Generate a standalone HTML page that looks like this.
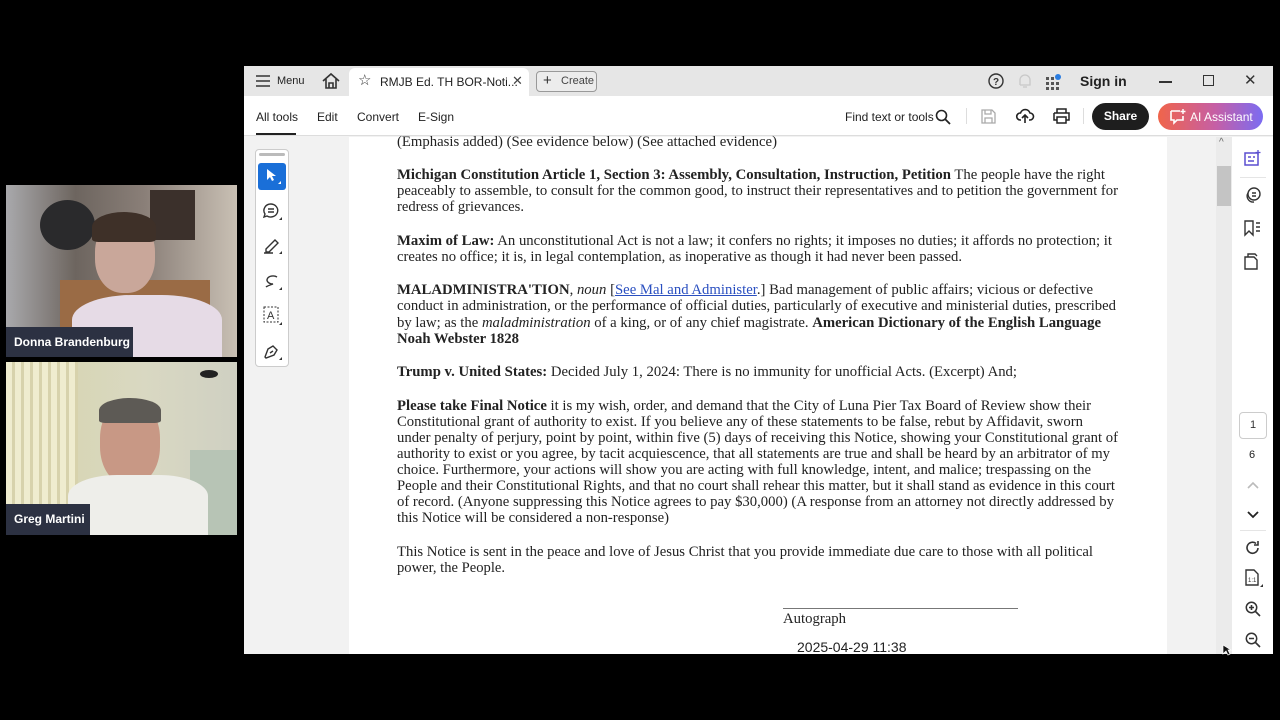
<!DOCTYPE html>
<html><head><meta charset="utf-8"><style>
*{margin:0;padding:0;box-sizing:border-box}
body{width:1280px;height:720px;background:#000;position:relative;overflow:hidden;font-family:"Liberation Sans",sans-serif}
.abs{position:absolute}
.l{position:absolute;left:397px;margin-top:1px;white-space:nowrap;font:14.6px/16px "Liberation Serif",serif;color:#222;transform-origin:0 50%}
.ui{font-family:"Liberation Sans",sans-serif;color:#222}
svg{position:absolute;overflow:visible}
a{color:#2a4fc0;text-decoration:underline}
</style></head><body>
<!-- video tiles -->
<div class="abs" style="left:6px;top:185px;width:231px;height:172px;background:linear-gradient(90deg,#a9a9ac 0%,#6d655f 30%,#8a7f78 60%,#c9c0b4 100%)"></div>
<div class="abs" style="left:40px;top:200px;width:55px;height:50px;border-radius:50%;background:#2a2a2c"></div>
<div class="abs" style="left:150px;top:190px;width:45px;height:50px;background:#3b302b"></div>
<div class="abs" style="left:60px;top:280px;width:150px;height:77px;background:#9a6b45"></div>
<div class="abs" style="left:95px;top:218px;width:60px;height:75px;border-radius:45%;background:#c9a79a"></div>
<div class="abs" style="left:92px;top:212px;width:64px;height:30px;border-radius:50% 50% 10% 10%;background:#3e3028"></div>
<div class="abs" style="left:72px;top:295px;width:150px;height:62px;border-radius:40% 40% 0 0;background:#e6dbe6"></div>
<div class="abs" style="left:6px;top:327px;width:127px;height:30px;background:#2c3142;color:#fff;font:bold 12px/30px 'Liberation Sans',sans-serif;padding-left:8px">Donna Brandenburg</div>

<div class="abs" style="left:6px;top:362px;width:231px;height:173px;background:linear-gradient(90deg,#e4e1c6 0%,#d8d6b4 25%,#d9d8c2 60%,#cfd0c2 100%)"></div>
<div class="abs" style="left:6px;top:362px;width:72px;height:173px;background:repeating-linear-gradient(90deg,#efeccf 0 6px,#d7d2ac 6px 9px)"></div>
<div class="abs" style="left:200px;top:370px;width:18px;height:8px;border-radius:50%;background:#222"></div>
<div class="abs" style="left:190px;top:450px;width:47px;height:85px;background:#b7c4b5"></div>
<div class="abs" style="left:100px;top:400px;width:60px;height:85px;border-radius:45%;background:#c89885"></div>
<div class="abs" style="left:99px;top:398px;width:62px;height:25px;border-radius:50% 50% 10% 10%;background:#5d5a55"></div>
<div class="abs" style="left:68px;top:475px;width:140px;height:60px;border-radius:35% 35% 0 0;background:#eeeeea"></div>
<div class="abs" style="left:6px;top:504px;width:84px;height:31px;background:#2c3142;color:#fff;font:bold 12px/31px 'Liberation Sans',sans-serif;padding-left:8px">Greg Martini</div>

<!-- window -->
<div class="abs" style="left:244px;top:66px;width:1029px;height:588px;background:#f2f2f2"></div>
<div class="abs" style="left:244px;top:66px;width:1029px;height:30px;background:#e6e6e6"></div>
<div class="abs" style="left:349px;top:68px;width:180px;height:28px;background:#fff;border-radius:6px 6px 0 0"></div>
<svg style="left:256px;top:75px" width="14" height="12"><path d="M0 1H14M0 6H14M0 11H14" stroke="#333" stroke-width="1.5"/></svg>
<div class="abs ui" style="left:277px;top:75px;font-size:11px">Menu</div>
<svg style="left:322px;top:73px" width="18" height="16"><path d="M1 8L9 1L17 8M4 6V15H14V6M7 15V10H11V15" stroke="#333" stroke-width="1.6" fill="none"/></svg>
<div class="abs ui" style="left:358px;top:71px;font-size:15px;color:#333">☆</div>
<div class="abs ui" style="left:380px;top:75px;font-size:12px">RMJB Ed. TH BOR-Noti...</div>
<div class="abs ui" style="left:512px;top:73px;font-size:13px;color:#444">✕</div>
<div class="abs" style="left:536px;top:71px;width:61px;height:21px;border:1px solid #999;border-radius:4px;background:#ececec"></div>
<div class="abs ui" style="left:543px;top:72px;font-size:15px;color:#333">+</div>
<div class="abs ui" style="left:561px;top:75px;font-size:11px;color:#444">Create</div>
<svg style="left:988px;top:73px" width="16" height="16"><circle cx="8" cy="8" r="7" stroke="#333" stroke-width="1.4" fill="none"/><text x="5" y="12" font-size="10" font-family="Liberation Sans" fill="#333" font-weight="bold">?</text></svg>
<svg style="left:1018px;top:73px" width="14" height="16"><path d="M2 12V7A5 5 0 0 1 12 7V12H2M5 14H9" stroke="#c8c8c8" stroke-width="1.3" fill="none"/></svg>
<svg style="left:1046px;top:74px" width="16" height="16"><g fill="#555"><rect x="0" y="3" width="3" height="3"/><rect x="5" y="3" width="3" height="3"/><rect x="0" y="8" width="3" height="3"/><rect x="5" y="8" width="3" height="3"/><rect x="10" y="8" width="3" height="3"/><rect x="0" y="13" width="3" height="3"/><rect x="5" y="13" width="3" height="3"/><rect x="10" y="13" width="3" height="3"/></g><circle cx="12" cy="3" r="3" fill="#2a7de1"/></svg>
<div class="abs ui" style="left:1080px;top:73px;font-size:14px;font-weight:bold">Sign in</div>
<div class="abs" style="left:1159px;top:81px;width:13px;height:1.5px;background:#333"></div>
<div class="abs" style="left:1203px;top:75px;width:11px;height:11px;border:1.3px solid #333"></div>
<div class="abs ui" style="left:1244px;top:71px;font-size:15px;color:#333">✕</div>

<!-- toolbar -->
<div class="abs" style="left:244px;top:96px;width:1029px;height:40px;background:#fff;border-bottom:1px solid #ddd"></div>
<div class="abs ui" style="left:256px;top:110px;font-size:12px">All tools</div>
<div class="abs" style="left:256px;top:133px;width:40px;height:2px;background:#222"></div>
<div class="abs ui" style="left:317px;top:110px;font-size:12px">Edit</div>
<div class="abs ui" style="left:357px;top:110px;font-size:12px">Convert</div>
<div class="abs ui" style="left:418px;top:110px;font-size:12px">E-Sign</div>
<div class="abs ui" style="left:845px;top:110px;font-size:12px">Find text or tools</div>
<svg style="left:935px;top:109px" width="16" height="16"><circle cx="6.5" cy="6.5" r="5" stroke="#222" stroke-width="1.6" fill="none"/><path d="M10 10L15 15" stroke="#222" stroke-width="1.8"/></svg>
<div class="abs" style="left:966px;top:108px;width:1px;height:16px;background:#ddd"></div>
<svg style="left:981px;top:109px" width="15" height="15"><path d="M1 1H11L14 4V14H1Z M4 1V5H10V1 M4 14V9H11V14" stroke="#aaa" stroke-width="1.3" fill="none"/></svg>
<svg style="left:1016px;top:108px" width="18" height="16"><path d="M5 12H4A3.5 3.5 0 0 1 4.5 5A5 5 0 0 1 14 5A3.5 3.5 0 0 1 14 12H13M9 15V7M6 10L9 7L12 10" stroke="#222" stroke-width="1.6" fill="none"/></svg>
<svg style="left:1053px;top:108px" width="17" height="16"><path d="M4 5V1H13V5M1 5H16V12H13M4 12H1V5M4 9H13V15H4Z" stroke="#222" stroke-width="1.5" fill="none"/></svg>
<div class="abs" style="left:1083px;top:108px;width:1px;height:16px;background:#ddd"></div>
<div class="abs" style="left:1092px;top:103px;width:57px;height:27px;border-radius:14px;background:#1e1e1e;color:#fff;font:bold 12px/27px 'Liberation Sans';text-align:center">Share</div>
<div class="abs" style="left:1158px;top:103px;width:105px;height:27px;border-radius:14px;background:linear-gradient(90deg,#f0644a,#c55fa6 55%,#7b6cf2)"></div>
<svg style="left:1170px;top:109px" width="16" height="15"><path d="M1 2H10M1 2V11H4V14L7 11H13V7" stroke="#fff" stroke-width="1.6" fill="none"/><path d="M13 0V5M10.5 2.5H15.5" stroke="#fff" stroke-width="1.4"/></svg>
<div class="abs" style="left:1190px;top:110px;color:#fff;font:12px 'Liberation Sans'">AI Assistant</div>

<!-- left tool panel -->
<div class="abs" style="left:255px;top:149px;width:34px;height:218px;background:#fff;border:1px solid #ccc;border-radius:4px"></div>
<div class="abs" style="left:259px;top:153px;width:26px;height:3px;background:#bbb;border-radius:2px"></div>
<div class="abs" style="left:258px;top:163px;width:28px;height:27px;background:#1a6fd8;border-radius:3px"></div>
<svg style="left:267px;top:169px" width="16" height="16"><path d="M0 0L0 11L3 8L5 12L7 11L5 7L9 7Z" fill="#fff"/><path d="M14 12V15H11Z" fill="#fff"/></svg>
<svg style="left:263px;top:203px" width="20" height="18"><path d="M8 1A7 6.5 0 1 1 4 13L1 14L2 11A7 6.5 0 0 1 8 1ZM5 6H11M5 9H11" stroke="#333" stroke-width="1.4" fill="none"/><path d="M19 14V17H16Z" fill="#333"/></svg>
<svg style="left:263px;top:237px" width="20" height="18"><path d="M3 12L12 3L15 6L6 15H3ZM1 16H10" stroke="#333" stroke-width="1.4" fill="none"/><path d="M19 14V17H16Z" fill="#333"/></svg>
<svg style="left:263px;top:273px" width="20" height="18"><path d="M14 4A6 4 0 1 0 10 11C7 12 4 13 3 14" stroke="#333" stroke-width="1.4" fill="none"/><path d="M19 14V17H16Z" fill="#333"/></svg>
<svg style="left:263px;top:306px" width="20" height="20"><rect x="1" y="1" width="14" height="15" stroke="#333" stroke-dasharray="2 1.5" fill="none"/><text x="4" y="13" font-size="11" font-family="Liberation Sans" fill="#333">A</text><path d="M19 16V19H16Z" fill="#333"/></svg>
<svg style="left:263px;top:343px" width="20" height="18"><path d="M2 14L5 6L10 3L14 7L11 12L3 15ZM7 10L10 8" stroke="#333" stroke-width="1.4" fill="none"/><path d="M19 14V17H16Z" fill="#333"/></svg>

<!-- page -->
<div class="abs" style="left:349px;top:137px;width:818px;height:517px;background:#fff"></div>
<!-- scrollbar -->
<div class="abs" style="left:1216px;top:137px;width:16px;height:517px;background:#ebebeb"></div>
<div class="abs ui" style="left:1219px;top:137px;font-size:10px;color:#666">^</div>
<div class="abs" style="left:1217px;top:166px;width:14px;height:40px;background:#c4c4c4"></div>
<!-- right rail -->
<div class="abs" style="left:1232px;top:137px;width:41px;height:517px;background:#fff"></div>
<svg style="left:1244px;top:150px" width="17" height="16"><rect x="1" y="3" width="13" height="12" stroke="#5b4fd0" stroke-width="1.5" fill="none"/><path d="M4 7H7M4 11H10M9 7H11" stroke="#5b4fd0" stroke-width="1.5"/><path d="M14 0V5M11.5 2.5H16.5" stroke="#5b4fd0" stroke-width="1.3"/></svg>
<div class="abs" style="left:1240px;top:177px;width:26px;height:1px;background:#e5e5e5"></div>
<svg style="left:1244px;top:187px" width="17" height="17"><circle cx="10" cy="7" r="6" stroke="#333" stroke-width="1.4" fill="none"/><path d="M4 6A6 6 0 0 0 10 15M8 6H12M8 9H12" stroke="#333" stroke-width="1.4" fill="none"/></svg>
<svg style="left:1244px;top:220px" width="17" height="17"><path d="M1 1H9V15L5 11L1 15Z M12 3H16M12 7H16M12 11H16" stroke="#333" stroke-width="1.4" fill="none"/></svg>
<svg style="left:1244px;top:253px" width="17" height="17"><path d="M4 4V1H11L13 3 M1 4H10L13 7V16H1Z" stroke="#333" stroke-width="1.4" fill="none"/></svg>
<div class="abs" style="left:1239px;top:412px;width:28px;height:27px;border:1px solid #ccc;border-radius:4px;font:11px/25px 'Liberation Sans';text-align:center;color:#333">1</div>
<div class="abs ui" style="left:1249px;top:449px;font-size:11px">6</div>
<svg style="left:1247px;top:482px" width="12" height="8"><path d="M1 6L6 1L11 6" stroke="#bbb" stroke-width="1.6" fill="none"/></svg>
<svg style="left:1247px;top:511px" width="12" height="8"><path d="M1 1L6 6L11 1" stroke="#222" stroke-width="1.8" fill="none"/></svg>
<div class="abs" style="left:1240px;top:530px;width:26px;height:1px;background:#e5e5e5"></div>
<svg style="left:1245px;top:540px" width="16" height="16"><path d="M13 8A5.5 5.5 0 1 1 11 3.5M13 1V5H9" stroke="#333" stroke-width="1.6" fill="none"/></svg>
<svg style="left:1245px;top:569px" width="18" height="19"><path d="M1 1H9L13 5V16H1Z" stroke="#333" stroke-width="1.4" fill="none"/><text x="3" y="13" font-size="6" font-family="Liberation Sans" fill="#333">1:1</text><path d="M18 15V18H15Z" fill="#333"/></svg>
<svg style="left:1245px;top:601px" width="16" height="16"><circle cx="6.5" cy="6.5" r="5.2" stroke="#333" stroke-width="1.5" fill="none"/><path d="M10.5 10.5L15 15M4 6.5H9M6.5 4V9" stroke="#333" stroke-width="1.6"/></svg>
<svg style="left:1245px;top:632px" width="16" height="16"><circle cx="6.5" cy="6.5" r="5.2" stroke="#333" stroke-width="1.5" fill="none"/><path d="M10.5 10.5L15 15M4 6.5H9" stroke="#333" stroke-width="1.6"/></svg>
<svg style="left:1222px;top:644px" width="12" height="12"><path d="M1 1L1 10L4 7L6 11L8 10L6 6L9 6Z" fill="#111" stroke="#fff" stroke-width=".7"/></svg>

<!-- document text -->
<div class="l" data-r="777" style="top:133px">(Emphasis added) (See evidence below) (See attached evidence)</div>
<div class="l" data-r="1105" style="top:166px"><b>Michigan Constitution Article 1, Section 3: Assembly, Consultation, Instruction, Petition</b> The people have the right</div>
<div class="l" data-r="1118" style="top:182px">peaceably to assemble, to consult for the common good, to instruct their representatives and to petition the government for</div>
<div class="l" data-r="524" style="top:198px">redress of grievances.</div>
<div class="l" data-r="1112" style="top:232px"><b>Maxim of Law:</b> An unconstitutional Act is not a law; it confers no rights; it imposes no duties; it affords no protection; it</div>
<div class="l" data-r="962" style="top:248px">creates no office; it is, in legal contemplation, as inoperative as though it had never been passed.</div>
<div class="l" data-r="1093" style="top:281px"><b>MALADMINISTRA'TION</b>, <i>noun</i> [<a>See Mal and Administer</a>.] Bad management of public affairs; vicious or defective</div>
<div class="l" data-r="1116" style="top:297px">conduct in administration, or the performance of official duties, particularly of executive and ministerial duties, prescribed</div>
<div class="l" data-r="1101" style="top:314px">by law; as the <i>maladministration</i> of a king, or of any chief magistrate. <b>American Dictionary of the English Language</b></div>
<div class="l" data-r="519" style="top:330px"><b>Noah Webster 1828</b></div>
<div class="l" data-r="1017" style="top:363px"><b>Trump v. United States:</b> Decided July 1, 2024: There is no immunity for unofficial Acts. (Excerpt) And;</div>
<div class="l" data-r="1091" style="top:397px"><b>Please take Final Notice</b> it is my wish, order, and demand that the City of Luna Pier Tax Board of Review show their</div>
<div class="l" data-r="1083" style="top:413px">Constitutional grant of authority to exist. If you believe any of these statements to be false, rebut by Affidavit, sworn</div>
<div class="l" data-r="1118" style="top:429px">under penalty of perjury, point by point, within five (5) days of receiving this Notice, showing your Constitutional grant of</div>
<div class="l" data-r="1110" style="top:445px">authority to exist or you agree, by tacit acquiescence, that all statements are true and shall be heard by an arbitrator of my</div>
<div class="l" data-r="1091" style="top:461px">choice. Furthermore, your actions will show you are acting with full knowledge, intent, and malice; trespassing on the</div>
<div class="l" data-r="1115" style="top:477px">People and their Constitutional Rights, and that no court shall rehear this matter, but it shall stand as evidence in this court</div>
<div class="l" data-r="1114" style="top:493px">of record. (Anyone suppressing this Notice agrees to pay $30,000) (A response from an attorney not directly addressed by</div>
<div class="l" data-r="669" style="top:509px">this Notice will be considered a non-response)</div>
<div class="l" data-r="1093" style="top:543px">This Notice is sent in the peace and love of Jesus Christ that you provide immediate due care to those with all political</div>
<div class="l" data-r="505" style="top:559px">power, the People.</div>
<div class="abs" style="left:783px;top:608px;width:235px;height:1px;background:#777"></div>
<div class="l" data-r="846" style="left:783px;top:610px">Autograph</div>
<div class="abs" style="left:797px;top:639px;font:14px/16px 'Liberation Sans',sans-serif;color:#222">2025-04-29 11:38</div>
<script>
document.querySelectorAll('.l[data-r]').forEach(function(e){
 var left=parseFloat(getComputedStyle(e).left);
 var target=parseFloat(e.getAttribute('data-r'))-left;
 var w=e.getBoundingClientRect().width;
 if(w>0)e.style.transform='scaleX('+(target/w)+')';
});
</script>
</body></html>
